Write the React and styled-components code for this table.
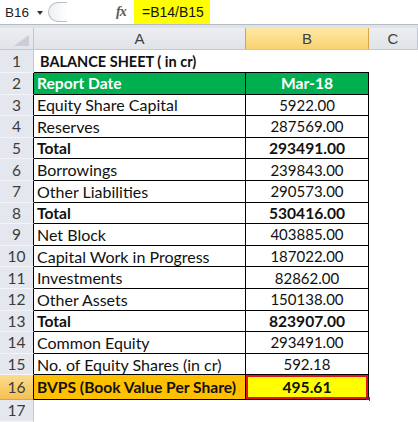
import React from 'react';
import styled, { createGlobalStyle } from 'styled-components';

const GlobalStyle = createGlobalStyle`
	html, body {
		margin: 0;
		padding: 0;
		background: #ffffff;
	}
	body {
		font-family: 'Lato', 'Liberation Sans', sans-serif;
		overflow: hidden;
	}
`;

const rows = [
	{ n: 1, a: 'BALANCE SHEET ( in cr)', b: '', kind: 'title', h: 23 },
	{ n: 2, a: 'Report Date', b: 'Mar-18', kind: 'head', h: 21.6 },
	{ n: 3, a: 'Equity Share Capital', b: '5922.00', h: 21.6 },
	{ n: 4, a: 'Reserves', b: '287569.00', h: 21.6 },
	{ n: 5, a: 'Total', b: '293491.00', bold: true, h: 21.6 },
	{ n: 6, a: 'Borrowings', b: '239843.00', h: 21.6 },
	{ n: 7, a: 'Other Liabilities', b: '290573.00', h: 21.6 },
	{ n: 8, a: 'Total', b: '530416.00', bold: true, h: 21.6 },
	{ n: 9, a: 'Net Block', b: '403885.00', h: 21.6 },
	{ n: 10, a: 'Capital Work in Progress', b: '187022.00', h: 21.6 },
	{ n: 11, a: 'Investments', b: '82862.00', h: 21.6 },
	{ n: 12, a: 'Other Assets', b: '150138.00', h: 21.6 },
	{ n: 13, a: 'Total', b: '823907.00', bold: true, h: 21.6 },
	{ n: 14, a: 'Common Equity', b: '293491.00', h: 21.6 },
	{ n: 15, a: 'No. of Equity Shares (in cr)', b: '592.18', h: 21.6 },
	{ n: 16, a: 'BVPS (Book Value Per Share)', b: '495.61', kind: 'result', h: 24.5 },
	{ n: 17, a: '', b: '', kind: 'blank', h: 22 },
];

function App() {
	return (
		<>
			<GlobalStyle />
			<Window>
				<FormulaBar>
					<NameBox>
						B16
						<DropArrow />
					</NameBox>
					<Splitter />
					<Fx>fx</Fx>
					<FormulaText>=B14/B15</FormulaText>
				</FormulaBar>
				<Gap />
				<HeaderRow>
					<Corner>
						<svg width="15" height="11" viewBox="0 0 15 11">
							<polygon points="15,0 15,11 0,11" fill="#c9ced6" />
						</svg>
					</Corner>
					<ColHead>A</ColHead>
					<ColHead $active>B</ColHead>
					<ColHead>C</ColHead>
				</HeaderRow>
				{rows.map((r) => {
					const boxed = r.kind !== 'title' && r.kind !== 'blank';
					const bold = r.bold || ['title', 'head', 'result'].includes(r.kind);
					return (
						<Row key={r.n} $h={r.h}>
							<RowHead $active={r.kind === 'result'} $edge={boxed}>
								{r.n}
							</RowHead>
							<Cell
								$kind={r.kind}
								$bold={bold}
								$boxed={boxed}
								$under={r.kind === 'title'}
							>
								{r.a}
							</Cell>
							<Cell
								$kind={r.kind === 'result' ? 'picked' : r.kind}
								$bold={bold}
								$boxed={boxed}
								$under={r.kind === 'title'}
								$center
							>
								{r.b}
							</Cell>
							<Blank />
						</Row>
					);
				})}
			</Window>
		</>
	);
}

const Window = styled.div`
	width: 418px;
	height: 422px;
	overflow: hidden;
	background: #ffffff;
`;

const FormulaBar = styled.div`
	display: flex;
	align-items: stretch;
	height: 24px;
	border-bottom: 1px solid #b6bcc6;
	font-family: 'Liberation Sans', Arial, sans-serif;
	font-size: 13.5px;
	color: #1e1e1e;
	background: #ffffff;
`;

const NameBox = styled.div`
	display: flex;
	align-items: center;
	width: 46px;
	padding-left: 5px;
	box-sizing: border-box;
	gap: 8px;
`;

const DropArrow = styled.span`
	width: 0;
	height: 0;
	border-left: 3.5px solid transparent;
	border-right: 3.5px solid transparent;
	border-top: 4px solid #333;
	margin-top: 1px;
`;

const Splitter = styled.div`
	width: 18px;
	margin: 2px 0 2px 2px;
	border: 1px solid #b9bec7;
	border-right: none;
	border-radius: 11px 0 0 11px;
	background: linear-gradient(90deg, #eef0f3, #ffffff);
`;

const Fx = styled.div`
	display: flex;
	align-items: center;
	margin-left: 49px;
	width: 18px;
	font-family: 'Liberation Serif', serif;
	font-style: italic;
	font-weight: bold;
	font-size: 14px;
	color: #5a5a5a;
	letter-spacing: -1px;
`;

const FormulaText = styled.div`
	display: flex;
	align-items: center;
	width: 76px;
	padding-left: 8px;
	box-sizing: border-box;
	background: #ffff00;
	font-size: 14px;
	color: #111;
`;

const Gap = styled.div`
	height: 3px;
	background: #dfe3e8;
`;

const Grid = styled.div`
	display: grid;
	grid-template-columns: 34px 212px 123px 1fr;
`;

const HeaderRow = styled(Grid)`
	height: 22px;
	background: linear-gradient(#eceef1, #e0e3e8);
	border-bottom: 1px solid #c3c8d0;
	box-sizing: border-box;
	font-family: 'Liberation Sans', Arial, sans-serif;
	font-size: 15px;
	color: #404040;
`;

const Corner = styled.div`
	display: flex;
	align-items: flex-end;
	justify-content: flex-end;
	padding: 0 4px 3px 0;
	border-right: 1px solid #c3c8d0;
`;

const ColHead = styled.div`
	display: flex;
	align-items: center;
	justify-content: center;
	border-right: 1px solid ${(p) => (p.$active ? '#d9a445' : '#c3c8d0')};
	border-left: ${(p) => (p.$active ? '1px solid #d9a445' : 'none')};
	background: ${(p) =>
		p.$active ? 'linear-gradient(#fde9a8, #f9d26f)' : 'transparent'};
	margin-left: ${(p) => (p.$active ? '-1px' : '0')};
`;

const Row = styled(Grid)`
	height: ${(p) => p.$h}px;
`;

const RowHead = styled.div`
	display: flex;
	align-items: center;
	justify-content: center;
	background: ${(p) =>
		p.$active ? 'linear-gradient(#fbdc8f, #f5c052)' : '#e4e8ee'};
	border-bottom: 1px solid ${(p) => (p.$active ? '#d9a445' : '#f3f5f8')};
	border-right: 1px solid ${(p) => (p.$edge ? '#000000' : '#c3c8d0')};
	box-sizing: border-box;
	font-size: 15.5px;
	color: #3c3c3c;
`;

const cellBg = {
	head: '#00b050',
	result: '#ffc000',
	picked: '#ffff00',
};

const Cell = styled.div`
	position: relative;
	display: flex;
	align-items: center;
	justify-content: ${(p) => (p.$center ? 'center' : 'flex-start')};
	padding-left: ${(p) => (p.$center ? '0' : p.$under ? '6px' : '3px')};
	box-sizing: border-box;
	white-space: nowrap;
	font-size: ${(p) =>
		p.$under ? '14.5px' : p.$center && !p.$bold ? '15px' : p.$bold ? '15.6px' : '16px'};
	font-weight: ${(p) => (p.$bold ? 700 : 400)};
	color: ${(p) => (p.$kind === 'head' ? '#ffffff' : '#111111')};
	background: ${(p) => cellBg[p.$kind] || '#ffffff'};
	border-right: 1px solid ${(p) => (p.$boxed ? '#000' : 'transparent')};
	border-bottom: 1px solid
		${(p) => (p.$boxed || p.$under ? '#000' : 'transparent')};
	${(p) => p.$under && `border-right: none;`}

	${(p) =>
		p.$kind === 'picked' &&
		`
		box-shadow: inset 0 0 0 2px #e3151b;
		&::after {
			content: '';
			position: absolute;
			right: -2px;
			bottom: -2px;
			width: 4px;
			height: 4px;
			background: #8b1a1a;
		}
	`}
`;

const Blank = styled.div`
	background: #ffffff;
`;

export default App;
